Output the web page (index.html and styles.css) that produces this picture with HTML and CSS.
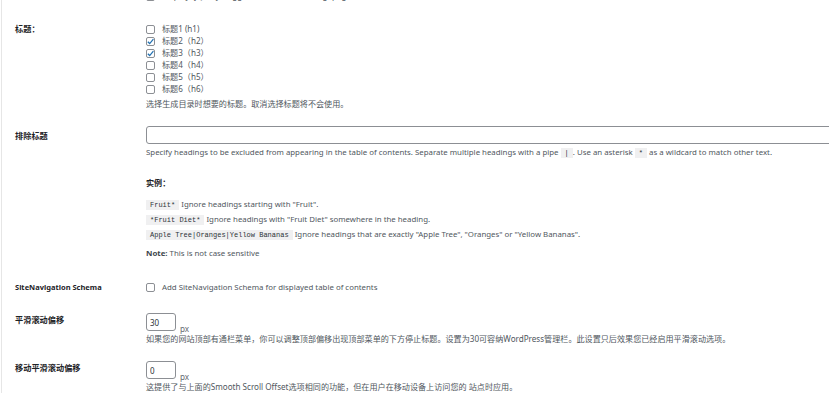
FILE: index.html
```html
<!DOCTYPE html>
<html lang="zh-CN">
<head>
    <meta charset="UTF-8">
    <meta name="viewport" content="width=device-width, initial-scale=1.0">
    <title>目录设置</title>
    <link rel="stylesheet" href="styles.css">
</head>
<body>
    <div class="wrap">
        <!-- 上一行，被窗口截掉 -->
        <div class="row row-cut">
            <div class="label"></div>
            <div class="field">
                <label class="check"><span class="cb"></span>Display (jQuery) toggle for smooth scrolling (pages)</label>
            </div>
        </div>

        <div class="row row-headings">
            <div class="label">标题：</div>
            <div class="field">
                <ul class="check-list">
                    <li><label class="check"><span class="cb"></span>标题1 (h1)</label></li>
                    <li><label class="check"><span class="cb checked"><svg viewBox="0 0 10 10"><path d="M2 5.2 L4.1 7.3 L8.2 2.4"/></svg></span>标题2（h2）</label></li>
                    <li><label class="check"><span class="cb checked"><svg viewBox="0 0 10 10"><path d="M2 5.2 L4.1 7.3 L8.2 2.4"/></svg></span>标题3（h3）</label></li>
                    <li><label class="check"><span class="cb"></span>标题4（h4）</label></li>
                    <li><label class="check"><span class="cb"></span>标题5（h5）</label></li>
                    <li><label class="check"><span class="cb"></span>标题6（h6）</label></li>
                </ul>
                <p class="desc">选择生成目录时想要的标题。取消选择标题将不会使用。</p>
            </div>
        </div>

        <div class="row row-exclude">
            <div class="label">排除标题</div>
            <div class="field">
                <input type="text" class="text-wide" value="">
                <p class="desc latin">Specify headings to be excluded from appearing in the table of contents. Separate multiple headings with a pipe <code>|</code>. Use an asterisk <code>*</code> as a wildcard to match other text.</p>
                <div class="examples">
                    <p class="examples-title">实例：</p>
                    <ul class="example-list latin">
                        <li><code>Fruit*</code> Ignore headings starting with "Fruit".</li>
                        <li><code>*Fruit Diet*</code> Ignore headings with "Fruit Diet" somewhere in the heading.</li>
                        <li><code>Apple Tree|Oranges|Yellow Bananas</code> Ignore headings that are exactly "Apple Tree", "Oranges" or "Yellow Bananas".</li>
                    </ul>
                    <p class="note latin"><strong>Note:</strong> This is not case sensitive</p>
                </div>
            </div>
        </div>

        <div class="row row-schema">
            <div class="label label-latin">SiteNavigation Schema</div>
            <div class="field">
                <label class="check latin"><span class="cb"></span>Add SiteNavigation Schema for displayed table of contents</label>
            </div>
        </div>

        <div class="row row-offset">
            <div class="label">平滑滚动偏移</div>
            <div class="field">
                <div class="num-line"><input type="text" class="text-small" value="30"><span class="unit">px</span></div>
                <p class="desc">如果您的网站顶部有通栏菜单，你可以调整顶部偏移出现顶部菜单的下方停止标题。设置为30可容纳WordPress管理栏。此设置只后效果您已经启用平滑滚动选项。</p>
            </div>
        </div>

        <div class="row row-offset">
            <div class="label">移动平滑滚动偏移</div>
            <div class="field">
                <div class="num-line"><input type="text" class="text-small" value="0"><span class="unit">px</span></div>
                <p class="desc">这提供了与上面的Smooth Scroll Offset选项相同的功能，但在用户在移动设备上访问您的 站点时应用。</p>
            </div>
        </div>
    </div>
</body>
</html>
```

FILE: styles.css
```css
html, body {
    margin: 0;
    padding: 0;
    background: #fff;
    overflow: hidden;
}

body {
    font-family: "Noto Sans", "Noto Sans CJK SC", sans-serif;
    font-size: 8.1px;
    color: #3c434a;
}

.latin {
    font-size: 7.85px;
}

.wrap {
    margin-left: 1px;
    border-left: 1px solid #e6e6e6;
    padding-left: 13px;
    min-height: 399px;
}

.row {
    display: grid;
    grid-template-columns: 131px 1fr;
}

.label {
    font-weight: bold;
    font-size: 8.2px;
    color: #1d2327;
    line-height: 12px;
}

.label-latin {
    font-size: 7.5px;
}

.field {
    min-width: 0;
}

ul {
    list-style: none;
    margin: 0;
    padding: 0;
}

p {
    margin: 0;
}

.desc {
    color: #50575e;
    line-height: 12px;
    white-space: nowrap;
}

.check {
    display: flex;
    align-items: center;
    gap: 7px;
    height: 12px;
    line-height: 12px;
    white-space: nowrap;
    color: #50575e;
}

.cb {
    box-sizing: border-box;
    width: 9px;
    height: 9px;
    border: 1px solid #8c8f94;
    border-radius: 2px;
    background: #fff;
    flex: none;
    display: flex;
}

.cb svg {
    width: 9px;
    height: 9px;
    margin: -1px;
    fill: none;
    stroke: #2271b1;
    stroke-width: 1.4;
}

code {
    font-family: "Liberation Mono", monospace;
    font-size: 7px;
    background: #f0f0f1;
    color: #2c3338;
    padding: 1px 4px;
}

/* rows */
.row-cut {
    margin-top: -10px;
}

.row-headings {
    margin-top: 21px;
}

.row-headings .desc {
    margin-top: 3px;
}

.row-exclude {
    margin-top: 16px;
}

.row-exclude .label {
    padding-top: 4px;
}

.text-wide {
    box-sizing: border-box;
    width: 720px;
    height: 18px;
    border: 1px solid #8c8f94;
    border-radius: 3px;
    display: block;
    margin: 0;
}

.row-exclude .desc {
    margin-top: 2px;
}

.examples {
    margin-top: 18px;
}

.examples-title {
    font-weight: bold;
    color: #1d2327;
    line-height: 12px;
}

.example-list {
    margin-top: 8px;
}

.example-list li {
    height: 15px;
    line-height: 15px;
    white-space: nowrap;
    color: #50575e;
}

.note {
    margin-top: 5px;
    line-height: 12px;
    color: #50575e;
}

.note strong {
    font-weight: bold;
    color: #3c434a;
}

.row-schema {
    margin-top: 22px;
}

.row-offset {
    margin-top: 20px;
}

.row-offset + .row-offset {
    margin-top: 16px;
}

.row-offset .label {
    padding-top: 1px;
}

.num-line {
    display: flex;
    align-items: flex-end;
    gap: 4px;
}

.text-small {
    box-sizing: border-box;
    width: 30px;
    height: 18px;
    border: 1px solid #8c8f94;
    border-radius: 3px;
    padding: 0 3px;
    font-family: "Noto Sans", sans-serif;
    font-size: 8px;
    color: #2c3338;
    margin: 0;
}

.unit {
    color: #646970;
    line-height: 10px;
    margin-bottom: -3px;
}

.row-offset .desc {
    margin-top: 2px;
}
```
